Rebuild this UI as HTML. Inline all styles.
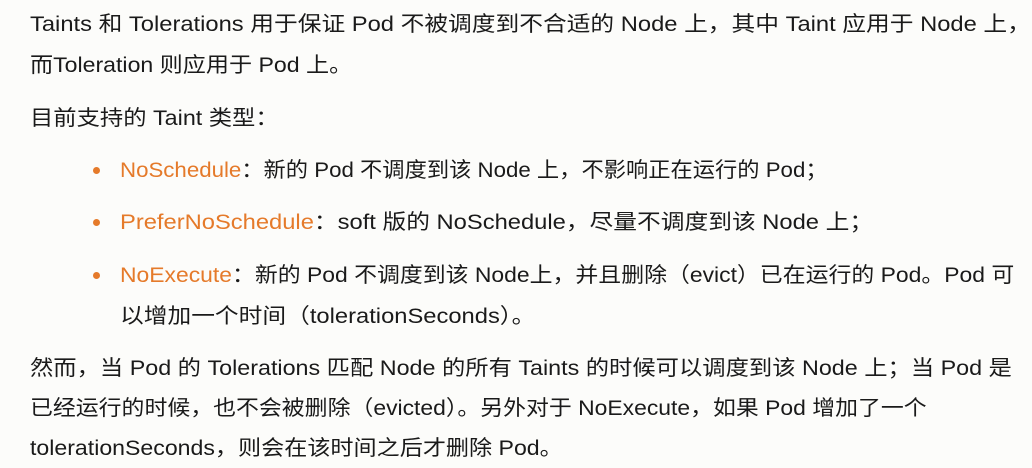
<!DOCTYPE html>
<html><head><meta charset="utf-8"><style>
html,body{margin:0;padding:0;background:#fcfcfa;width:1032px;height:468px;overflow:hidden}
.l{position:absolute;white-space:nowrap;font-family:"Liberation Sans","Noto Sans CJK SC",sans-serif;font-size:21px;line-height:26px;color:#1a1a1a;transform-origin:0 50%}
.o{color:#e57a2a}
.d{position:absolute;width:7px;height:7px;border-radius:50%;background:#e57a2a}
</style></head><body>
<div class="l" style="left:30px;top:12px;transform:scaleX(1.13)">Taints 和 Tolerations 用于保证 Pod 不被调度到不合适的 Node 上，其中 Taint 应用于 Node 上，</div>
<div class="l" style="left:30px;top:53px;transform:scaleX(1.10)">而Toleration 则应用于 Pod 上。</div>
<div class="l" style="left:30px;top:106px;transform:scaleX(1.11)">目前支持的 Taint 类型：</div>
<div class="d" style="left:93px;top:167px"></div>
<div class="l" style="left:120px;top:158px;transform:scaleX(1.06)"><span class="o">NoSchedule</span>：新的 Pod 不调度到该 Node 上，不影响正在运行的 Pod；</div>
<div class="d" style="left:93px;top:219px"></div>
<div class="l" style="left:120px;top:210px;transform:scaleX(1.13)"><span class="o">PreferNoSchedule</span>：soft 版的 NoSchedule，尽量不调度到该 Node 上；</div>
<div class="d" style="left:93px;top:272px"></div>
<div class="l" style="left:120px;top:263px;transform:scaleX(1.09)"><span class="o">NoExecute</span>：新的 Pod 不调度到该 Node上，并且删除（evict）已在运行的 Pod。Pod 可</div>
<div class="l" style="left:120px;top:304px;transform:scaleX(1.13)">以增加一个时间（tolerationSeconds）。</div>
<div class="l" style="left:30px;top:356px;transform:scaleX(1.11)">然而，当 Pod 的 Tolerations 匹配 Node 的所有 Taints 的时候可以调度到该 Node 上；当 Pod 是</div>
<div class="l" style="left:30px;top:396px;transform:scaleX(1.09)">已经运行的时候，也不会被删除（evicted）。另外对于 NoExecute，如果 Pod 增加了一个</div>
<div class="l" style="left:30px;top:436px;transform:scaleX(1.10)">tolerationSeconds，则会在该时间之后才删除 Pod。</div>
</body></html>
